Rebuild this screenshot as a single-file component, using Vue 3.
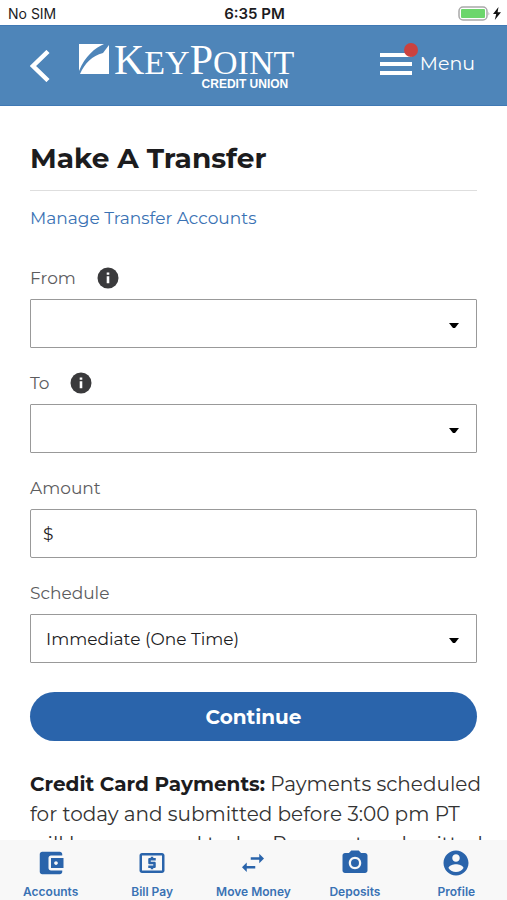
<script setup>
import { ref } from 'vue'

const from = ref('')
const to = ref('')
const amount = ref('')
const schedule = ref('once')

const tabs = [
  { name: 'Accounts', icon: 'M21 18v1c0 1.1-.9 2-2 2H5c-1.11 0-2-.9-2-2V5c0-1.1.89-2 2-2h14c1.1 0 2 .9 2 2v1h-9c-1.11 0-2 .9-2 2v8c0 1.1.89 2 2 2h9zm-9-2h10V8H12v8zm4-2.5c-.83 0-1.5-.67-1.5-1.5s.67-1.5 1.5-1.5 1.5.67 1.5 1.5-.67 1.5-1.5 1.5z' },
  { name: 'Bill Pay', icon: 'M11 17h2v-1h1c.55 0 1-.45 1-1v-3c0-.55-.45-1-1-1h-3v-1h4V8h-2V7h-2v1h-1c-.55 0-1 .45-1 1v3c0 .55.45 1 1 1h3v1H9v2h2v1zm9-13H4c-1.11 0-1.99.89-1.99 2L2 18c0 1.11.89 2 2 2h16c1.11 0 2-.89 2-2V6c0-1.11-.89-2-2-2zm0 14H4V6h16v12z' },
  { name: 'Move Money', icon: 'M7 11.500 3.200 15.300 7 19.100v-2.800h6.800v-2H7v-2.800zM20.800 8.400 17 4.600v2.800h-6.800v2H17v2.800l3.800-3.800z' },
  { name: 'Deposits', icon: 'M12 8.800a3.200 3.200 0 1 0 0 6.400 3.200 3.200 0 0 0 0-6.400zM9 2 7.170 4H4c-1.100 0-2 .9-2 2v12c0 1.100.9 2 2 2h16c1.100 0 2-.9 2-2V6c0-1.100-.9-2-2-2h-3.170L15 2H9zm3 15c-2.760 0-5-2.240-5-5s2.240-5 5-5 5 2.240 5 5-2.240 5-5 5z' },
  { name: 'Profile', icon: 'M12 2C6.480 2 2 6.480 2 12s4.480 10 10 10 10-4.480 10-10S17.520 2 12 2zm0 3c1.660 0 3 1.340 3 3s-1.340 3-3 3-3-1.340-3-3 1.340-3 3-3zm0 14.200c-2.500 0-4.710-1.280-6-3.220.03-1.990 4-3.080 6-3.080 1.990 0 5.970 1.090 6 3.080-1.290 1.940-3.500 3.220-6 3.220z' }
]
</script>

<template>
  <div class="app">
    <div class="status">
      <span class="carrier">No SIM</span>
      <span class="clock">6:35 PM</span>
      <span class="power">
        <svg width="32" height="16" viewBox="0 0 32 16" aria-hidden="true">
          <rect x="1" y="1" width="28" height="13" rx="4" fill="#fff" stroke="#a9a9a9" stroke-width="1.500" />
          <rect x="3" y="3" width="24" height="9" rx="1" fill="#6cd66c" />
          <path d="M30.500 5.500q1.500 2 0 4z" fill="#a9a9a9" />
        </svg>
        <svg width="8" height="13" viewBox="0 0 8 13" aria-hidden="true">
          <path d="M5.500 0 0 7h3.200L1.800 13 8 5.200H4.600z" fill="#111" />
        </svg>
      </span>
    </div>

    <header class="header">
      <button class="back" type="button" aria-label="Back">
        <svg width="20" height="32" viewBox="0 0 20 32" aria-hidden="true">
          <path d="M18 1.500 3 16l15 14.500" fill="none" stroke="#fff" stroke-width="4.500" />
        </svg>
      </button>
      <a class="logo" href="#">
        <svg class="mark" width="30" height="30" viewBox="0 0 30 30" aria-hidden="true">
          <path d="M0 0h25C16 4 6 12 0 27zM1 30C6 19 13 12 24 9L30 1v29z" fill="#fff" />
        </svg>
        <span class="words">
          <span class="name"><span class="cap">K</span>EY<span class="cap">P</span>OINT</span>
          <span class="sub">CREDIT UNION</span>
        </span>
      </a>
      <button class="menu" type="button">
        <span class="bars">
          <svg width="32" height="22" viewBox="0 0 32 22" aria-hidden="true">
            <path d="M0 2h32M0 11h32M0 20h32" stroke="#fff" stroke-width="4" />
          </svg>
          <span class="dot"></span>
        </span>
        Menu
      </button>
    </header>

    <main class="main">
      <h1>Make A Transfer</h1>
      <a class="manage" href="#">Manage Transfer Accounts</a>

      <form class="form" @submit.prevent>
        <div class="field">
          <div class="label">
            <label for="from">From</label>
            <button class="info" type="button" aria-label="About From">
              <svg width="22" height="22" viewBox="0 0 22 22" aria-hidden="true">
                <circle cx="11" cy="11" r="10.500" fill="#3a3a3c" />
                <path d="M9.700 5.500h2.600v2.300H9.700zM9.700 9.200h2.600v7H9.700z" fill="#fff" />
              </svg>
            </button>
          </div>
          <div class="picker">
            <select id="from" v-model="from"><option value=""></option></select>
            <svg class="caret" width="10" height="6" viewBox="0 0 10 6" aria-hidden="true"><path d="M0 0h10L6 5H4z" /></svg>
          </div>
        </div>

        <div class="field">
          <div class="label">
            <label for="to">To</label>
            <button class="info" type="button" aria-label="About To">
              <svg width="22" height="22" viewBox="0 0 22 22" aria-hidden="true">
                <circle cx="11" cy="11" r="10.500" fill="#3a3a3c" />
                <path d="M9.700 5.500h2.600v2.300H9.700zM9.700 9.200h2.600v7H9.700z" fill="#fff" />
              </svg>
            </button>
          </div>
          <div class="picker">
            <select id="to" v-model="to"><option value=""></option></select>
            <svg class="caret" width="10" height="6" viewBox="0 0 10 6" aria-hidden="true"><path d="M0 0h10L6 5H4z" /></svg>
          </div>
        </div>

        <div class="field">
          <div class="label"><label for="amount">Amount</label></div>
          <div class="money">
            <span>$</span>
            <input id="amount" v-model="amount" type="text" inputmode="decimal" />
          </div>
        </div>

        <div class="field">
          <div class="label"><label for="schedule">Schedule</label></div>
          <div class="picker">
            <select id="schedule" v-model="schedule"><option value="once">Immediate (One Time)</option></select>
            <svg class="caret" width="10" height="6" viewBox="0 0 10 6" aria-hidden="true"><path d="M0 0h10L6 5H4z" /></svg>
          </div>
        </div>

        <button class="continue" type="submit">Continue</button>
      </form>

      <p class="note">
        <strong>Credit Card Payments:</strong> Payments scheduled
        for today and submitted before 3:00 pm PT
        will be processed today. Payments submitted
      </p>
    </main>

    <nav class="tabs">
      <a v-for="tab in tabs" :key="tab.name" href="#">
        <svg width="30" height="30" viewBox="0 0 24 24" aria-hidden="true">
          <path :d="tab.icon" fill="#2a64ab" />
        </svg>
        <span>{{ tab.name }}</span>
      </a>
    </nav>
  </div>
</template>

<style>
body {
  background: #fff;
}
</style>

<style scoped>
.app {
  display: flex;
  flex-direction: column;
  height: 100vh;
  font-family: Montserrat, Inter, "Liberation Sans", sans-serif;
  color: #1c1c1e;
}
.app * {
  box-sizing: border-box;
}
button,
input,
select {
  font: inherit;
  color: inherit;
  margin: 0;
  padding: 0;
  border: 0;
  background: none;
}
a {
  text-decoration: none;
}
svg {
  display: block;
}
.status {
  display: grid;
  grid-template-columns: 1fr auto 1fr;
  align-items: center;
  flex: none;
  height: 25px;
  padding: 2px 6px 0 8px;
  font-family: Inter, sans-serif;
  font-size: 14px;
}
.clock {
  font-size: 15px;
  font-weight: 600;
}
.power {
  display: flex;
  align-items: center;
  justify-content: flex-end;
  gap: 3px;
}
.header {
  display: flex;
  align-items: center;
  flex: none;
  height: 81px;
  padding: 0 32px 0 30px;
  background: #4e85b9;
  border-top: 1px solid #4079b4;
  border-bottom: 1px solid #4079b4;
  color: #fff;
}
.back {
  margin-right: 29px;
}
.logo {
  display: flex;
  gap: 5px;
  padding-top: 2px;
  color: #fff;
}
.words {
  display: flex;
  flex-direction: column;
}
.name {
  font-family: "Liberation Serif", serif;
  font-size: 34px;
  line-height: 32px;
}
.cap {
  font-size: 42px;
  line-height: 32px;
}
.sub {
  align-self: flex-end;
  padding-right: 6px;
  font-family: "Liberation Sans", sans-serif;
  font-size: 12px;
  line-height: 10px;
  font-weight: 700;
}
.menu {
  display: flex;
  align-items: center;
  gap: 8px;
  margin-left: auto;
  padding-bottom: 3px;
  font-size: 19px;
  line-height: 24px;
}
.bars {
  position: relative;
}
.dot {
  position: absolute;
  top: -10px;
  right: -6px;
  width: 14px;
  height: 14px;
  border-radius: 50%;
  background: #cb423f;
}
.main {
  flex: 1;
  min-height: 0;
  overflow-y: auto;
  scrollbar-width: none;
  padding: 32px 30px 0;
}
h1 {
  margin: 0 0 15px;
  padding-bottom: 12px;
  border-bottom: 1px solid #dedede;
  font-size: 28px;
  line-height: 40px;
  font-weight: 700;
}
.manage {
  display: block;
  font-size: 17px;
  line-height: 24px;
  color: #3a72b4;
}
.form {
  display: flex;
  flex-direction: column;
  gap: 23px;
  margin-top: 36px;
}
.label {
  display: flex;
  align-items: center;
  gap: 21px;
  height: 24px;
  margin-bottom: 9px;
  font-size: 17px;
  line-height: 24px;
  color: #5c5c5e;
}
.picker {
  display: grid;
  align-items: center;
}
.picker > * {
  grid-area: 1 / 1;
}
select {
  appearance: none;
  width: 100%;
  height: 49px;
  padding: 0 40px 0 15px;
  border: 1px solid #999;
  border-radius: 1px;
  font-size: 17px;
}
.caret {
  justify-self: end;
  margin: 4px 18px 0 0;
  pointer-events: none;
}
.money {
  display: flex;
  align-items: center;
  gap: 8px;
  height: 49px;
  padding: 0 12px;
  border: 1px solid #999;
  border-radius: 2px;
  font-size: 17px;
}
.money input {
  flex: 1;
  min-width: 0;
  height: 40px;
  outline: 0;
}
.continue {
  height: 49px;
  margin-top: 6px;
  border-radius: 25px;
  background: #2a64ab;
  color: #fff;
  font-size: 20px;
  font-weight: 700;
}
.note {
  margin: 28px -10px 0 0;
  font-size: 20px;
  line-height: 30px;
  color: #333;
}
.note strong {
  color: #1c1c1e;
}
.tabs {
  display: grid;
  grid-template-columns: repeat(5, 1fr);
  flex: none;
  height: 60px;
  padding-top: 8px;
  background: #f8f8f8;
}
.tabs a {
  display: flex;
  flex-direction: column;
  align-items: center;
  gap: 6px;
  font-family: Inter, sans-serif;
  font-size: 12px;
  line-height: 16px;
  font-weight: 600;
  color: #3a72b4;
  white-space: nowrap;
}
</style>
